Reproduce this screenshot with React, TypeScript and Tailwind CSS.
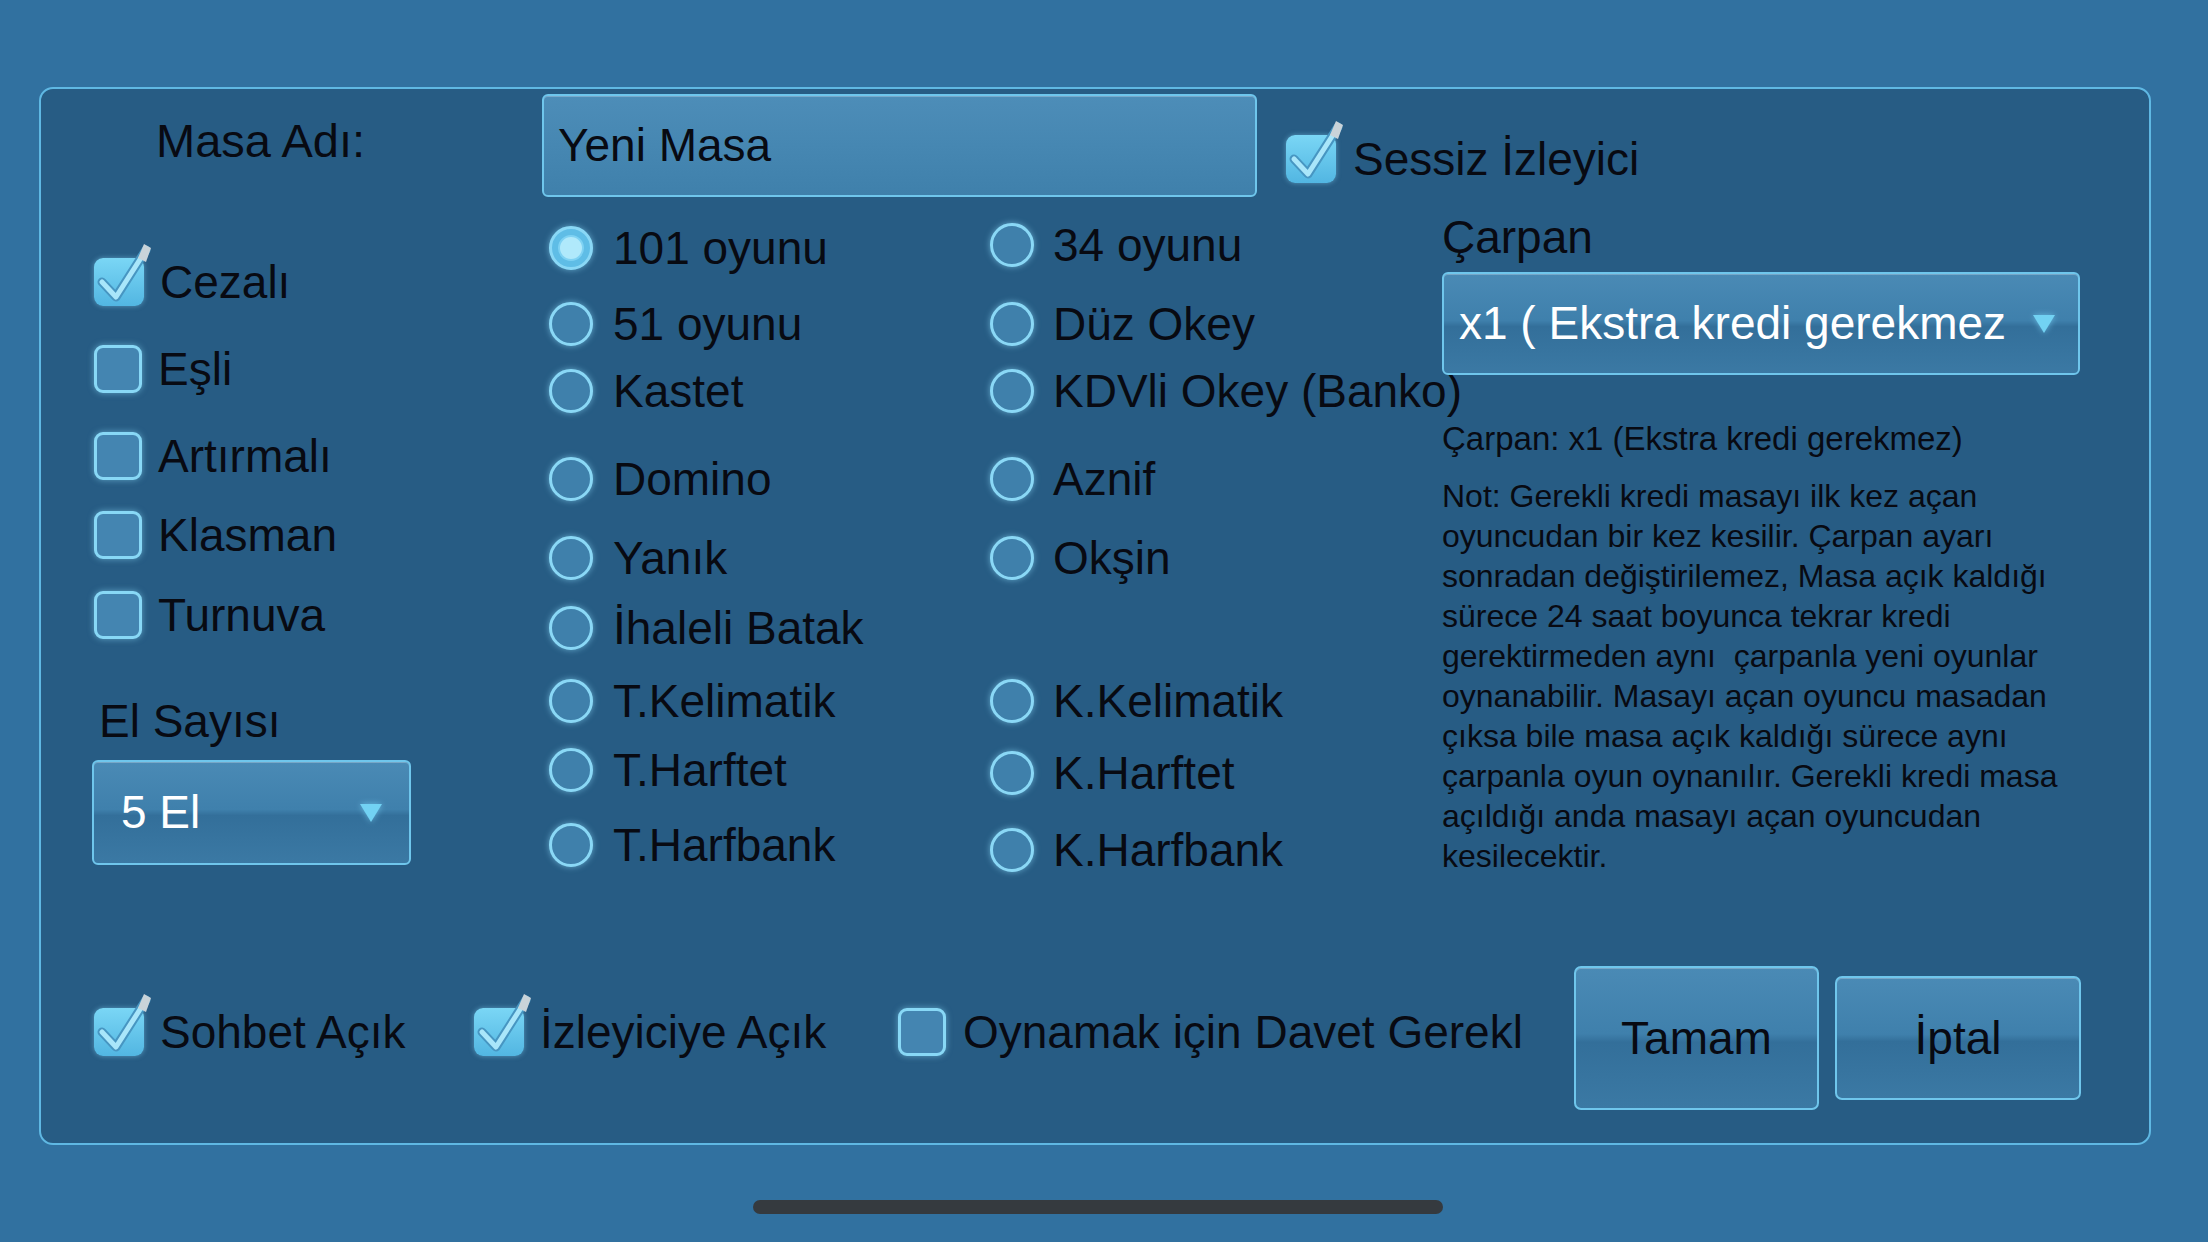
import React from 'react';

const gloss =
    'border-2 border-[#6fc6ec] bg-[linear-gradient(to_bottom,#4a8ab5_0%,#3f80ac_47%,#336f9a_53%,#3b79a4_100%)] shadow-[inset_0_1px_0_rgba(255,255,255,0.25)]';

const CheckBox = ({ checked }: { checked: boolean }) => {
    if (!checked) {
        return (
            <div className="w-[48px] h-[48px] shrink-0 rounded-[9px] border-[3px] border-[#88d8f6] bg-[#4485b1] shadow-[0_0_6px_rgba(140,220,250,0.55)]" />
        );
    }
    return (
        <div className="relative w-[50px] h-[48px] shrink-0 rounded-[9px] bg-[linear-gradient(to_bottom,#7ad6f5,#52b6e2)] shadow-[0_0_5px_rgba(140,220,250,0.5)]">
            <svg className="absolute left-0 -top-[16px] overflow-visible" width="58" height="64" viewBox="0 0 58 64">
                <path d="M8 40 L22 55 L52 8" fill="none" stroke="#4796c2" strokeWidth="9" strokeLinecap="round" strokeLinejoin="round" />
                <path d="M8 40 L22 55 L52 8" fill="none" stroke="#a9e6fa" strokeWidth="5" strokeLinecap="round" strokeLinejoin="round" />
                <path d="M44 16 L50 2 L57 6 L52 20 Z" fill="#c9d3d9" />
            </svg>
        </div>
    );
};

const Radio = ({ selected }: { selected?: boolean }) => (
    <div
        className={
            'w-[44px] h-[44px] shrink-0 rounded-full border-[3px] border-[#8ad8f6] flex items-center justify-center shadow-[0_0_6px_rgba(140,220,250,0.6)] ' +
            (selected ? 'bg-[#5fbde6]' : 'bg-[#3f80ab]')
        }
    >
        {selected && <div className="w-[26px] h-[26px] rounded-full bg-[#b0e9fb] border-2 border-[#7fd2f3]" />}
    </div>
);

const Arrow = () => (
    <svg width="24" height="20" viewBox="0 0 24 20" className="drop-shadow-[0_0_3px_rgba(120,210,245,0.7)]">
        <path d="M1 1 H23 L12 19 Z" fill="#72d2f3" />
    </svg>
);

const leftChecks = [
    { label: 'Cezalı', checked: true, mt: 'mt-[45px]' },
    { label: 'Eşli', checked: false, mt: 'mt-[27px]' },
    { label: 'Artırmalı', checked: false, mt: 'mt-[27px]' },
    { label: 'Klasman', checked: false, mt: 'mt-[19px]' },
    { label: 'Turnuva', checked: false, mt: 'mt-[20px]' },
];

const gamesA = [
    { label: '101 oyunu', mt: 'mt-[11px]', selected: true },
    { label: '51 oyunu', mt: 'mt-[16px]' },
    { label: 'Kastet', mt: 'mt-[7px]' },
    { label: 'Domino', mt: 'mt-[28px]' },
    { label: 'Yanık', mt: 'mt-[19px]' },
    { label: 'İhaleli Batak', mt: 'mt-[10px]' },
    { label: 'T.Kelimatik', mt: 'mt-[13px]' },
    { label: 'T.Harftet', mt: 'mt-[9px]' },
    { label: 'T.Harfbank', mt: 'mt-[15px]' },
];

const gamesB = [
    { label: '34 oyunu', mt: 'mt-[8px]' },
    { label: 'Düz Okey', mt: 'mt-[19px]' },
    { label: 'KDVli Okey (Banko)', mt: 'mt-[7px]' },
    { label: 'Aznif', mt: 'mt-[28px]' },
    { label: 'Okşin', mt: 'mt-[19px]' },
    { label: 'K.Kelimatik', mt: 'mt-[83px]' },
    { label: 'K.Harftet', mt: 'mt-[12px]' },
    { label: 'K.Harfbank', mt: 'mt-[17px]' },
];

const noteLines = [
    'Not: Gerekli kredi masayı ilk kez açan',
    'oyuncudan bir kez kesilir. Çarpan ayarı',
    'sonradan değiştirilemez, Masa açık kaldığı',
    'sürece 24 saat boyunca tekrar kredi',
    'gerektirmeden aynı  çarpanla yeni oyunlar',
    'oynanabilir. Masayı açan oyuncu masadan',
    'çıksa bile masa açık kaldığı sürece aynı',
    'çarpanla oyun oynanılır. Gerekli kredi masa',
    'açıldığı anda masayı açan oyuncudan',
    'kesilecektir.',
];

const App = () => {
    return (
        <div className="w-[2208px] h-[1242px] overflow-hidden bg-[#3171a0] pt-[87px] pl-[39px] font-['Liberation_Sans',Arial,sans-serif] text-[#080a12]">
            <div className="w-[2112px] h-[1058px] rounded-[14px] border-2 border-[#5fb8e3] bg-[#275c84] flex flex-col">
                {/* top row */}
                <div className="flex items-start pt-[5px] pl-[115px] h-[108px] shrink-0">
                    <div className="w-[386px] mt-[19px] text-[47px] leading-[56px]">Masa Adı:</div>
                    <div className="w-[715px] h-[103px] rounded-[6px] flex items-center pl-[14px] text-[46px] border-2 border-[#6fc6ec] bg-[linear-gradient(to_bottom,#4d8db8_0%,#4687b2_50%,#3f80ab_100%)] shadow-[inset_0_1px_0_rgba(255,255,255,0.25)]">
                        Yeni Masa
                    </div>
                    <div className="ml-[29px] mt-[35px] h-[60px] flex items-center gap-[17px]">
                        <CheckBox checked />
                        <span className="text-[46px] leading-[56px] whitespace-nowrap">Sessiz İzleyici</span>
                    </div>
                </div>

                {/* body */}
                <div className="flex pl-[53px] mt-[10px] h-[759px] shrink-0">
                    <div className="w-[455px] flex flex-col shrink-0">
                        {leftChecks.map((c) => (
                            <div key={c.label} className={'h-[60px] flex items-center gap-[16px] ' + c.mt}>
                                <CheckBox checked={c.checked} />
                                <span className="text-[46px] leading-[56px]">{c.label}</span>
                            </div>
                        ))}
                        <div className="mt-[48px] pl-[5px] text-[46px] leading-[56px]">El Sayısı</div>
                        <div className={'mt-[11px] -ml-[2px] w-[319px] h-[105px] rounded-[6px] flex items-center justify-between pl-[27px] pr-[26px] ' + gloss}>
                            <span className="text-[46px] text-white">5 El</span>
                            <Arrow />
                        </div>
                    </div>

                    <div className="w-[441px] flex flex-col shrink-0">
                        {gamesA.map((g) => (
                            <div key={g.label} className={'h-[60px] flex items-center gap-[20px] ' + g.mt}>
                                <Radio selected={g.selected} />
                                <span className="text-[46px] leading-[56px] whitespace-nowrap">{g.label}</span>
                            </div>
                        ))}
                    </div>

                    <div className="w-[452px] flex flex-col shrink-0">
                        {gamesB.map((g) => (
                            <div key={g.label} className={'h-[60px] flex items-center gap-[19px] ' + g.mt}>
                                <Radio />
                                <span className="text-[46px] leading-[56px] whitespace-nowrap">{g.label}</span>
                            </div>
                        ))}
                    </div>

                    <div className="w-[639px] flex flex-col shrink-0">
                        <div className="mt-[2px] text-[46px] leading-[56px]">Çarpan</div>
                        <div className={'mt-[7px] w-[638px] h-[103px] rounded-[6px] flex items-center justify-between pl-[15px] pr-[22px] ' + gloss}>
                            <span className="text-[46px] text-white whitespace-nowrap">x1 ( Ekstra kredi gerekmez</span>
                            <Arrow />
                        </div>
                        <div className="mt-[44px] text-[33px] leading-[40px] whitespace-nowrap">Çarpan: x1 (Ekstra kredi gerekmez)</div>
                        <div className="mt-[17px] text-[32px] leading-[40px]">
                            {noteLines.map((l) => (
                                <div key={l} className="whitespace-pre">{l}</div>
                            ))}
                        </div>
                    </div>
                </div>

                {/* bottom row */}
                <div className="flex items-center pl-[53px] h-[144px] shrink-0">
                    <div className="w-[380px] flex items-center gap-[16px] mb-[12px] shrink-0">
                        <CheckBox checked />
                        <span className="text-[46px] leading-[56px] whitespace-nowrap">Sohbet Açık</span>
                    </div>
                    <div className="w-[424px] flex items-center gap-[16px] mb-[12px] shrink-0">
                        <CheckBox checked />
                        <span className="text-[46px] leading-[56px] whitespace-nowrap">İzleyiciye Açık</span>
                    </div>
                    <div className="flex items-center gap-[17px] mb-[12px] shrink-0">
                        <CheckBox checked={false} />
                        {/* the game clips this label at the box edge */}
                        <div className="w-[561px] overflow-hidden">
                            <span className="text-[46px] leading-[56px] whitespace-nowrap">Oynamak için Davet Gerekli</span>
                        </div>
                    </div>
                    <button className={'ml-[50px] w-[245px] h-[144px] rounded-[7px] text-[46px] text-[#080a12] ' + gloss}>Tamam</button>
                    <button className={'ml-[16px] w-[246px] h-[124px] rounded-[7px] text-[46px] text-[#080a12] ' + gloss}>İptal</button>
                </div>
            </div>
            <div className="ml-[714px] mt-[55px] w-[690px] h-[14px] rounded-full bg-[#353a3f]" />
        </div>
    );
};

export default App;
